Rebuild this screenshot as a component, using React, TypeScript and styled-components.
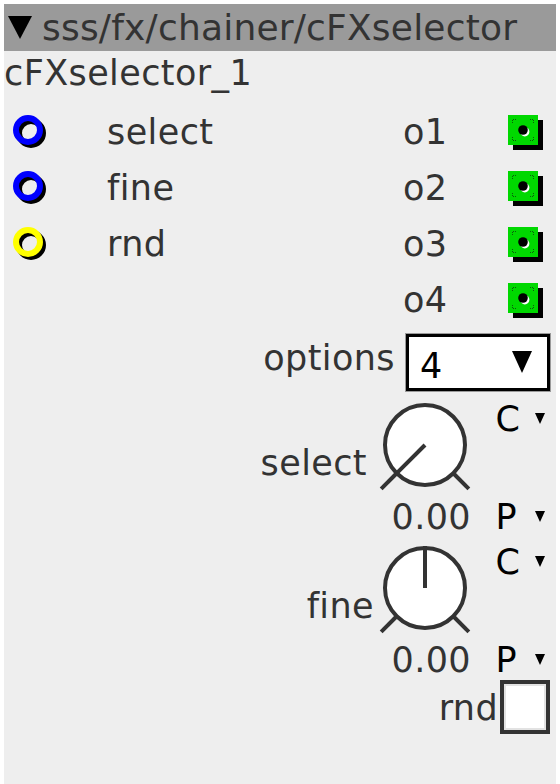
import React from 'react'
import styled, { createGlobalStyle } from 'styled-components'

const GlobalStyle = createGlobalStyle`
  html, body {
    margin: 0;
    padding: 0;
    background: #ffffff;
  }
`

const Page = styled.div`
  padding: 4px 4px 0 4px;
`

const Panel = styled.div`
  width: 552px;
  height: 780px;
  background: #eeeeee;
  color: #333333;
  font-family: 'DejaVu Sans', 'Liberation Sans', sans-serif;
  font-size: 35px;
  letter-spacing: 0.4px;
  overflow: hidden;
`

const Header = styled.div`
  height: 47px;
  background: #9a9a9a;
  display: flex;
  align-items: center;
  padding-left: 4px;
  white-space: nowrap;
  line-height: 47px;
`

const Caret = styled.span<{ $w: number; $h: number }>`
  display: block;
  flex: none;
  width: 0;
  height: 0;
  border-left: ${(p) => p.$w / 2}px solid transparent;
  border-right: ${(p) => p.$w / 2}px solid transparent;
  border-top: ${(p) => p.$h}px solid #000000;
`

const Title = styled.span`
  margin-left: 10px;
  font-size: 36px;
  letter-spacing: 0.2px;
`

const InstanceName = styled.div`
  height: 48px;
  line-height: 44px;
  white-space: nowrap;
`

const IoArea = styled.div`
  display: flex;
  justify-content: space-between;
  padding-top: 4.9px;
`

const IoList = styled.div`
  display: flex;
  flex-direction: column;
`

const InletRow = styled.div`
  display: grid;
  grid-template-columns: 94px auto;
  align-items: center;
  height: 56px;
  line-height: 56px;
  padding-left: 9px;
`

const OutletRow = styled.div`
  display: grid;
  grid-template-columns: 105px 36px;
  align-items: center;
  height: 56px;
  line-height: 56px;
  padding-right: 12px;
`

const Jack = styled.svg`
  display: block;
`

const ParamArea = styled.div`
  display: flex;
  flex-direction: column;
  align-items: flex-end;
  padding-right: 6px;
  margin-top: 6.1px;
`

const OptionsRow = styled.div`
  display: flex;
  align-items: flex-start;
  gap: 11px;
`

const Label = styled.span<{ $top: number; $gap?: number }>`
  display: block;
  line-height: 36px;
  margin-top: ${(p) => p.$top}px;
  margin-right: ${(p) => p.$gap ?? 0}px;
  white-space: nowrap;
`

const Dropdown = styled.div`
  box-sizing: border-box;
  width: 144px;
  height: 57px;
  border: 3px solid #000000;
  box-shadow: 0 0 0 1px #9a9a9a;
  background: #ffffff;
  display: flex;
  justify-content: space-between;
  align-items: flex-start;
  padding: 0 15px 0 11px;
  color: #000000;
`

const DropdownValue = styled.span`
  line-height: 36px;
  margin-top: 10.9px;
`

const DropdownCaret = styled(Caret)`
  margin-top: 14px;
`

const KnobBlock = styled.div<{ $top: number }>`
  display: flex;
  align-items: flex-start;
  margin-top: ${(p) => p.$top}px;
`

const KnobColumn = styled.div`
  display: flex;
  flex-direction: column;
  align-items: flex-end;
`

const KnobValue = styled.span`
  line-height: 36px;
  margin-top: 5.9px;
  padding-right: 2px;
`

const ModeColumn = styled.div`
  display: flex;
  flex-direction: column;
  margin-left: 22.5px;
  margin-right: 5px;
`

const ModeRow = styled.div<{ $top: number }>`
  display: flex;
  align-items: flex-start;
  margin-top: ${(p) => p.$top}px;
  color: #000000;
`

const ModeLetter = styled.span`
  width: 39.5px;
  line-height: 36px;
`

const ModeCaret = styled(Caret)`
  margin-top: 12px;
`

const CheckRow = styled.div`
  display: flex;
  align-items: flex-start;
  margin-top: 2.1px;
`

const CheckBox = styled.div`
  box-sizing: border-box;
  width: 50px;
  height: 54px;
  border: 4px solid #333333;
  box-shadow: inset 0 0 0 2px #e2e2e2;
  background: #ffffff;
`

const Inlet = ({ color }: { color: string }) => (
  <Jack width="36" height="36" viewBox="0 0 36 36">
    <circle cx="18" cy="19" r="12" fill="none" stroke="#000000" strokeWidth="6" />
    <circle cx="15" cy="16" r="12" fill="none" stroke={color} strokeWidth="6" />
  </Jack>
)

const Outlet = () => (
  <Jack width="36" height="36" viewBox="0 0 36 36">
    <rect x="5" y="6" width="30" height="30" fill="#000000" />
    <rect x="0" y="1" width="30" height="30" fill="#00d800" />
    <g stroke="#0b5c0b" strokeWidth="1" fill="none" strokeDasharray="1 1">
      <path d="M4.5 9V5.5H8" />
      <path d="M22 5.5H25.5V9" />
      <path d="M4.5 23V26.5H8" />
      <path d="M22 26.5H25.5V23" />
    </g>
    <circle cx="16.8" cy="17.8" r="4.6" fill="#ffffff" />
    <circle cx="15" cy="16" r="4.8" fill="#000000" />
  </Jack>
)

const Knob = ({ angle }: { angle: number }) => {
  const cx = 48
  const cy = 46
  const rad = (angle * Math.PI) / 180
  const x = cx + 42 * Math.sin(rad)
  const y = cy - 42 * Math.cos(rad)
  const d = 0.7071
  return (
    <svg width="96" height="94" viewBox="0 0 96 94" style={{ display: 'block' }}>
      <g stroke="#333333" strokeWidth="4" fill="none">
        <circle cx={cx} cy={cy} r="40" fill="#ffffff" />
        <path d={`M${cx - 40 * d} ${cy + 40 * d}L${cx - 62 * d} ${cy + 62 * d}`} />
        <path d={`M${cx + 40 * d} ${cy + 40 * d}L${cx + 62 * d} ${cy + 62 * d}`} />
        <path d={`M${cx} ${cy}L${x} ${y}`} />
      </g>
    </svg>
  )
}

type KnobParamProps = {
  label: string
  labelGap: number
  value: string
  angle: number
  top: number
}

const KnobParam = ({ label, labelGap, value, angle, top }: KnobParamProps) => (
  <KnobBlock $top={top}>
    <Label $top={45.9} $gap={labelGap}>
      {label}
    </Label>
    <KnobColumn>
      <Knob angle={angle} />
      <KnobValue>{value}</KnobValue>
    </KnobColumn>
    <ModeColumn>
      <ModeRow $top={1.9}>
        <ModeLetter>C</ModeLetter>
        <ModeCaret $w={11} $h={11} />
      </ModeRow>
      <ModeRow $top={62}>
        <ModeLetter>P</ModeLetter>
        <ModeCaret $w={11} $h={11} />
      </ModeRow>
    </ModeColumn>
  </KnobBlock>
)

const inlets = [
  { name: 'select', color: '#0000ff' },
  { name: 'fine', color: '#0000ff' },
  { name: 'rnd', color: '#ffff00' },
]

const outlets = ['o1', 'o2', 'o3', 'o4']

const App = () => (
  <>
    <GlobalStyle />
    <Page>
      <Panel>
        <Header>
          <Caret $w={24} $h={23} />
          <Title>sss/fx/chainer/cFXselector</Title>
        </Header>
        <InstanceName>cFXselector_1</InstanceName>
        <IoArea>
          <IoList>
            {inlets.map((inlet) => (
              <InletRow key={inlet.name}>
                <Inlet color={inlet.color} />
                <span>{inlet.name}</span>
              </InletRow>
            ))}
          </IoList>
          <IoList>
            {outlets.map((name) => (
              <OutletRow key={name}>
                <span>{name}</span>
                <Outlet />
              </OutletRow>
            ))}
          </IoList>
        </IoArea>
        <ParamArea>
          <OptionsRow>
            <Label $top={5.9}>options</Label>
            <Dropdown>
              <DropdownValue>4</DropdownValue>
              <DropdownCaret $w={21} $h={22} />
            </Dropdown>
          </OptionsRow>
          <KnobParam label="select" labelGap={10} value="0.00" angle={-135} top={8} />
          <KnobParam label="fine" labelGap={3} value="0.00" angle={0} top={7.1} />
          <CheckRow>
            <Label $top={9.9} $gap={2}>
              rnd
            </Label>
            <CheckBox />
          </CheckRow>
        </ParamArea>
      </Panel>
    </Page>
  </>
)

export default App
